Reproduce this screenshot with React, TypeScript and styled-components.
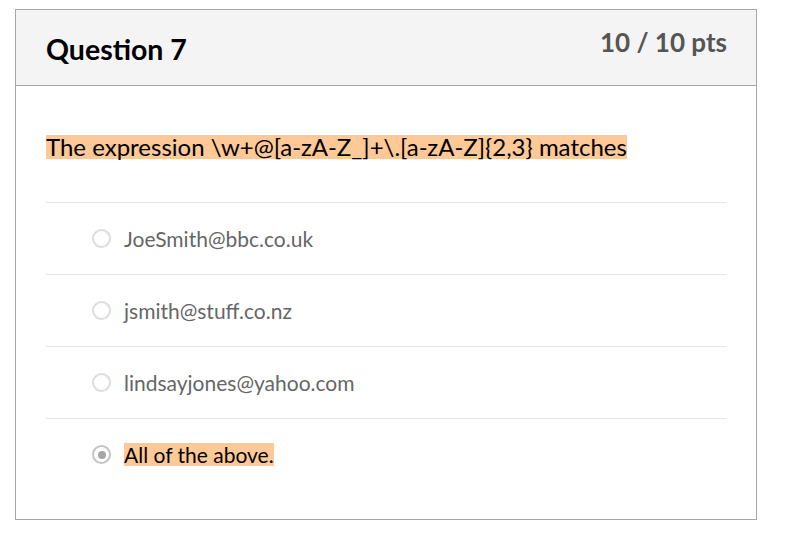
import * as React from 'react'
import styled, { createGlobalStyle } from 'styled-components'

const Global = createGlobalStyle`
  body {
    margin: 0;
    background: #fff;
    font-family: Lato, "Open Sans", sans-serif;
  }
`

const Page = styled.div`
  padding: 9px 0 0 15px;
`

const Card = styled.div`
  width: 740px;
  border: 1px solid #a6a6a6;
  background: #fff;
`

const Header = styled.div`
  height: 76px;
  background: #f4f4f4;
  border-bottom: 1px solid #a6a6a6;
  display: flex;
  justify-content: space-between;
  align-items: flex-start;
  padding: 0 29px 0 30px;
  box-sizing: border-box;
`

const Title = styled.h2`
  margin: 22px 0 0;
  font-size: 28.5px;
  line-height: normal;
  font-weight: 700;
  color: #000;
`

const Points = styled.div`
  margin-top: 16px;
  font-size: 26px;
  line-height: normal;
  font-weight: 700;
  color: #555;
`

const Body = styled.div`
  padding: 49px 29px 29px 30px;
`

const Prompt = styled.div`
  font-size: 24px;
  line-height: 24px;
  color: #000;
  margin-bottom: 43px;
`

const Mark = styled.span`
  display: inline-block;
  background: #fec897;
`

const Row = styled.div`
  height: 71px;
  border-top: 1px solid #e6e6e6;
  display: flex;
  align-items: center;
  padding-left: 46px;
`

const Radio = styled.span<{ $checked?: boolean }>`
  width: 19px;
  height: 19px;
  border-radius: 50%;
  border: 2px solid ${(p) => (p.$checked ? '#c4c4c4' : '#dcdcdc')};
  box-sizing: border-box;
  margin-right: 13px;
  display: flex;
  align-items: center;
  justify-content: center;

  &::after {
    content: '';
    display: ${(p) => (p.$checked ? 'block' : 'none')};
    width: 8px;
    height: 8px;
    border-radius: 50%;
    background: #a6a6a6;
  }
`

const Label = styled.span<{ $checked?: boolean }>`
  display: inline-block;
  font-size: 21px;
  line-height: 23px;
  color: ${(p) => (p.$checked ? '#000' : '#666')};
  background: ${(p) => (p.$checked ? '#fec897' : 'transparent')};
`

const answers = [
  { text: 'JoeSmith@bbc.co.uk' },
  { text: 'jsmith@stuff.co.nz' },
  { text: 'lindsayjones@yahoo.com' },
  { text: 'All of the above.', checked: true },
]

export default function App() {
  return (
    <Page>
      <Global />
      <Card>
        <Header>
          <Title>Question 7</Title>
          <Points>10 / 10 pts</Points>
        </Header>
        <Body>
          <Prompt>
            <Mark>The expression \w+@[a-zA-Z_]+\.[a-zA-Z]{'{2,3}'} matches</Mark>
          </Prompt>
          {answers.map((a) => (
            <Row key={a.text}>
              <Radio $checked={a.checked} />
              <Label $checked={a.checked}>{a.text}</Label>
            </Row>
          ))}
        </Body>
      </Card>
    </Page>
  )
}
